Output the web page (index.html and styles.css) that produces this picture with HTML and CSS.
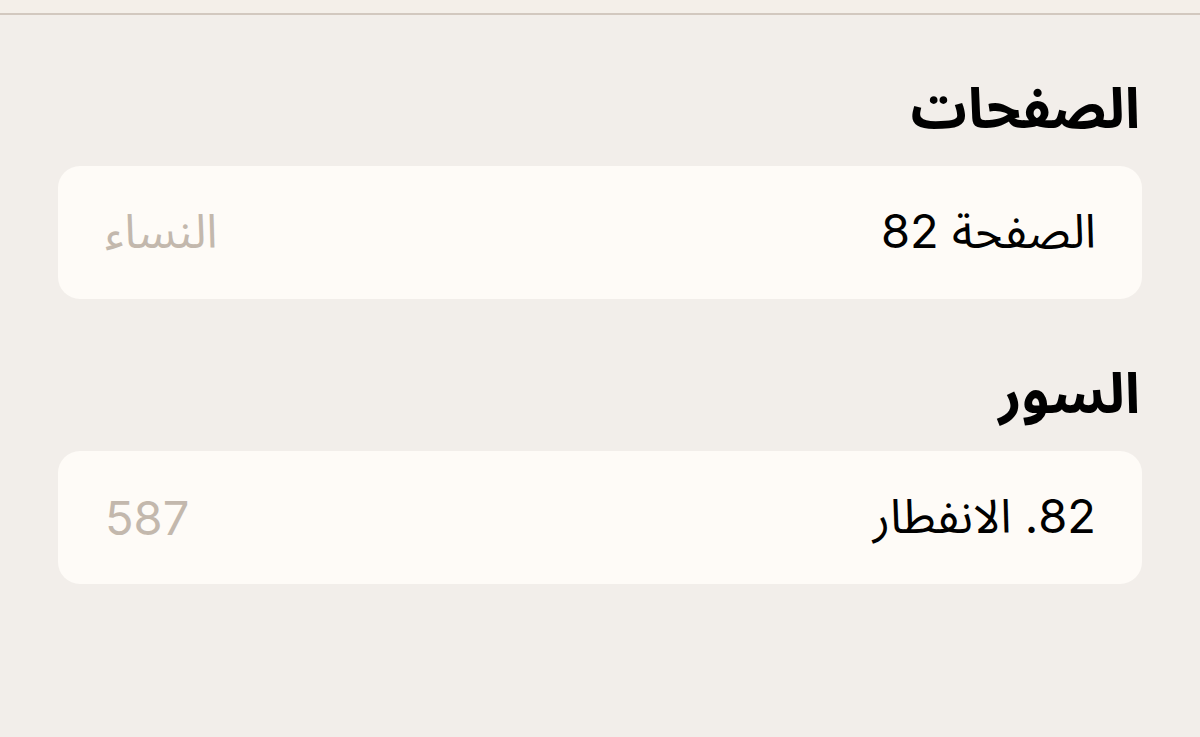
FILE: index.html
```html
<!DOCTYPE html>
<html lang="ar" dir="rtl">
<head>
<meta charset="utf-8">
<link rel="stylesheet" href="styles.css">
</head>
<body>
<div class="topbar"></div>
<main class="content">
  <section class="group">
    <h2 class="title">الصفحات</h2>
    <div class="card">
      <span class="primary">الصفحة 82</span>
      <span class="secondary">النساء</span>
    </div>
  </section>
  <section class="group">
    <h2 class="title">السور</h2>
    <div class="card">
      <span class="primary">82. الانفطار</span>
      <span class="secondary">587</span>
    </div>
  </section>
</main>
</body>
</html>
```
FILE: styles.css
```css
* { box-sizing: border-box; }
html, body {
  margin: 0;
  padding: 0;
  background: #f2eeea;
  font-family: Inter, "Noto Sans Arabic", "DejaVu Sans", sans-serif;
  color: #000;
}
.topbar {
  height: 15px;
  background: #f4efe9;
  border-bottom: 2px solid #d2c8bf;
}
.content {
  padding: 57px 58px 0 58px;
  display: flex;
  flex-direction: column;
  gap: 58px;
}
.group {
  display: flex;
  flex-direction: column;
  gap: 22px;
}
.title {
  margin: 0;
  font-size: 56px;
  font-weight: 700;
  line-height: 72px;
  padding-right: 2px;
}
.card {
  background: #fefbf7;
  border-radius: 22px;
  height: 133px;
  padding: 0 46px 0 47px;
  display: flex;
  align-items: center;
  justify-content: space-between;
  font-size: 47px;
}
.secondary {
  color: #c3b8ad;
}
```
